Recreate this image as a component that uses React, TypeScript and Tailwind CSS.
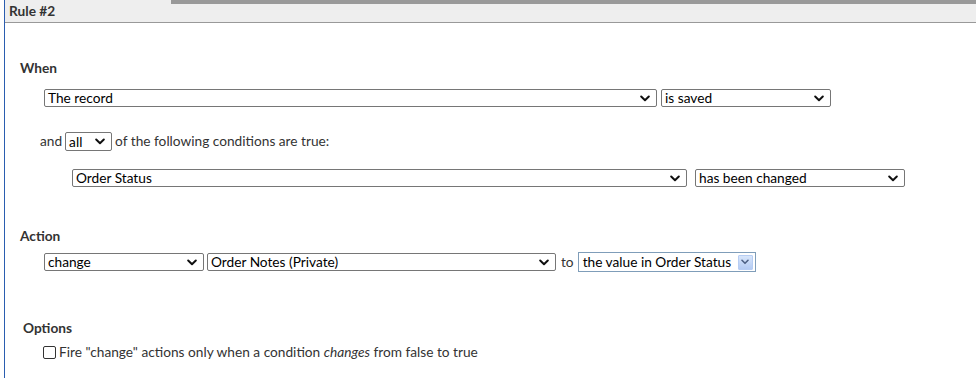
import React from 'react';

const Chevron = () => (
  <svg width="10" height="7" viewBox="0 0 10 7" className="shrink-0">
    <path d="M1.2 1.5 L5 5.2 L8.8 1.5" fill="none" stroke="#111" strokeWidth="2" strokeLinecap="round" strokeLinejoin="round" />
  </svg>
);

function Select({ label, className }: { label: string; className: string }) {
  return (
    <div
      className={`flex items-center justify-between h-[18px] border border-[#767676] rounded-[2px] bg-white pl-[3px] pr-[6px] text-[13.7px] leading-[16px] text-black overflow-hidden ${className}`}
    >
      <span className="whitespace-nowrap">{label}</span>
      <Chevron />
    </div>
  );
}

function OldSelect({ label, className }: { label: string; className: string }) {
  return (
    <div className={`flex items-center justify-between h-[20px] border border-[#7f9db9] bg-white pl-[4px] pr-[2px] text-[13.7px] leading-[16px] text-black ${className}`}>
      <span className="whitespace-nowrap">{label}</span>
      <div className="w-[15px] h-[15px] flex items-center justify-center bg-gradient-to-b from-[#d8e6fb] to-[#b4cbf3] border border-[#b7cdf3] rounded-[1px]">
        <svg width="8" height="6" viewBox="0 0 8 6">
          <path d="M1 1.3 L4 4.3 L7 1.3" fill="none" stroke="#4d6185" strokeWidth="1.6" strokeLinecap="round" strokeLinejoin="round" />
        </svg>
      </div>
    </div>
  );
}

export default function App() {
  return (
    <div className="relative w-[976px] h-[378px] overflow-hidden bg-white pl-[4px] font-['Lato',sans-serif] text-[13.7px] text-[#222]">
      {/* edge of the panel above */}
      <div className="absolute top-0 left-[171px] right-0 h-[4px] bg-[#999]" />

      <div className="h-full border-l border-[#2a5db0]">
        <div className="h-[23px] bg-[#eeeeee] border-b border-[#999] pl-[4px] leading-[22px] font-bold text-[#333]">
          Rule #2
        </div>

        <div className="pl-[15px]">
          <div className="mt-[37px] leading-[16px] font-bold text-[#333]">When</div>

          <div className="mt-[13px] ml-[24px] flex gap-[4px]">
            <Select label="The record" className="w-[613px]" />
            <Select label="is saved" className="w-[170px]" />
          </div>

          <div className="mt-[25px] ml-[20px] flex items-center gap-[3px] h-[19px] text-[#333]">
            <span>and</span>
            <Select label="all" className="w-[47px] h-[19px]" />
            <span>of the following conditions are true:</span>
          </div>

          <div className="mt-[18px] ml-[52px] flex gap-[8px]">
            <Select label="Order Status" className="w-[615px]" />
            <Select label="has been changed" className="w-[210px]" />
          </div>

          <div className="mt-[41px] leading-[16px] font-bold text-[#333]">Action</div>

          <div className="mt-[8px] ml-[24px] flex items-center h-[20px] text-[#333]">
            <Select label="change" className="w-[160px]" />
            <Select label="Order Notes (Private)" className="w-[349px] ml-[3px]" />
            <span className="ml-[5px] mr-[4px]">to</span>
            <OldSelect label="the value in Order Status" className="w-[178px]" />
          </div>

          <div className="mt-[48px] ml-[3px] leading-[16px] font-bold text-[#333]">Options</div>

          <div className="mt-[8px] ml-[23px] flex items-center gap-[3px] h-[16px] text-[#333]">
            <div className="w-[13px] h-[13px] border border-[#333] rounded-[2px] bg-white" />
            <span>
              Fire "change" actions only when a condition <i>changes</i> from false to true
            </span>
          </div>
        </div>
      </div>
    </div>
  );
}
